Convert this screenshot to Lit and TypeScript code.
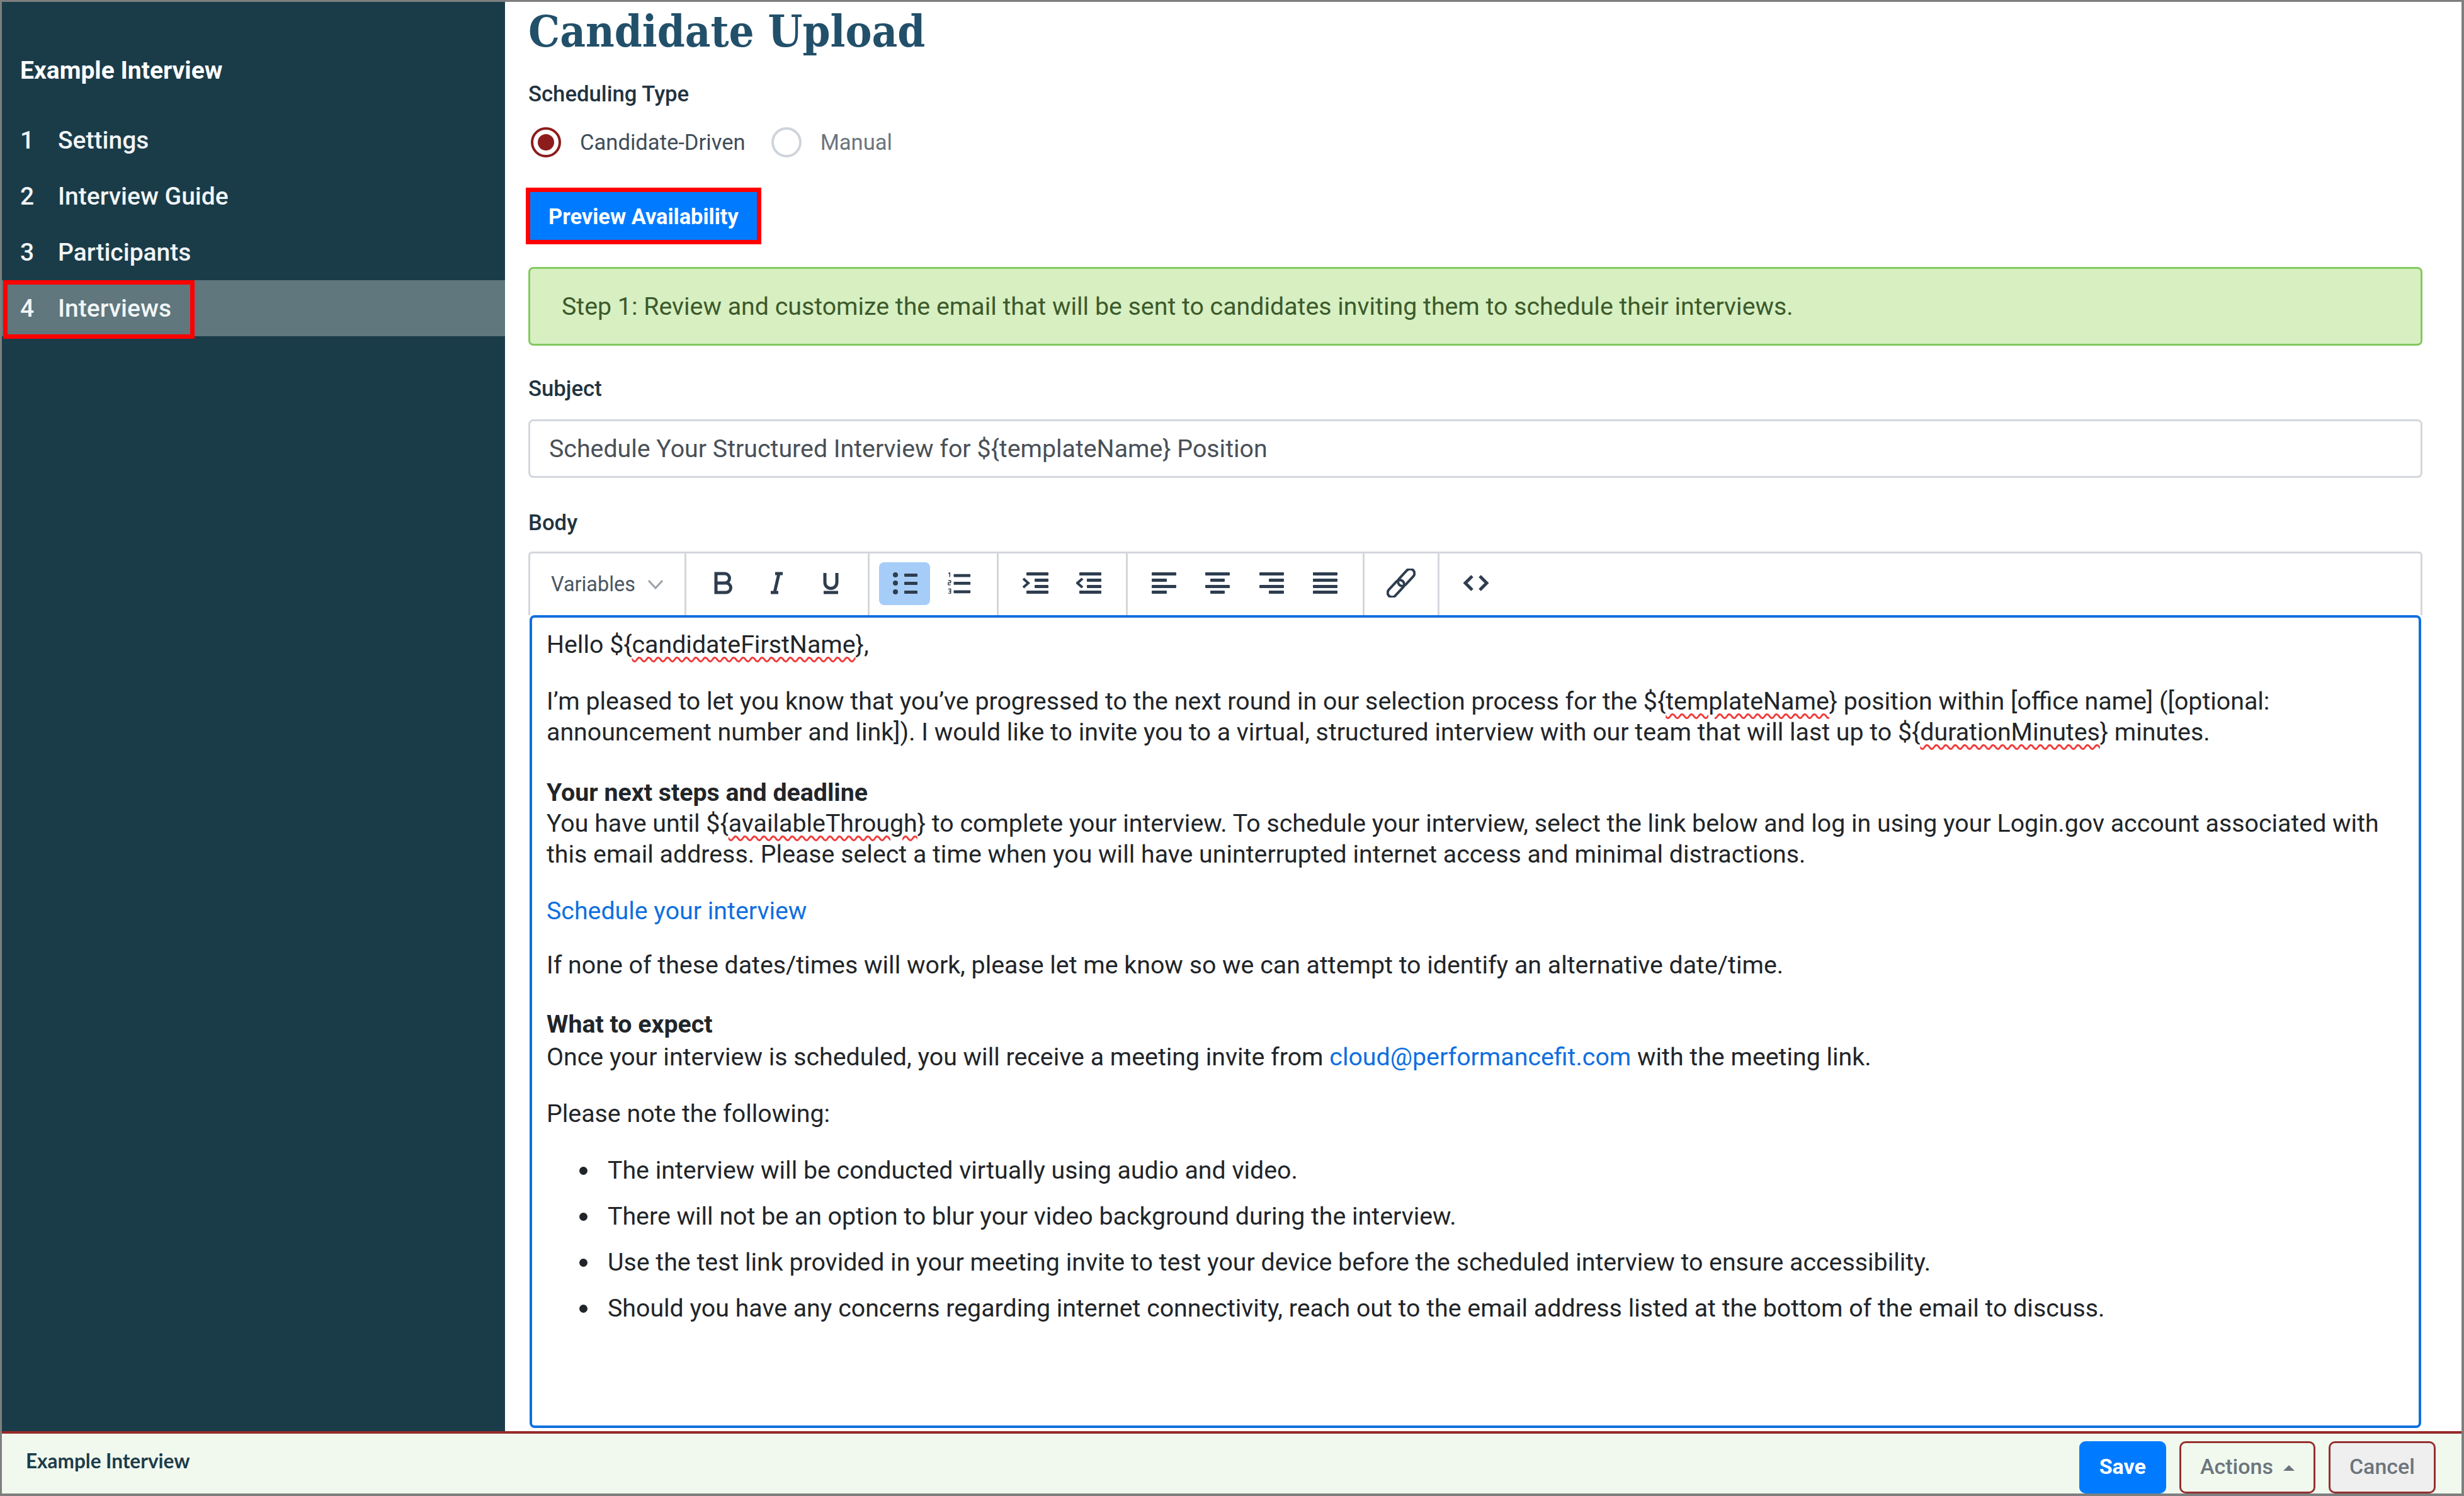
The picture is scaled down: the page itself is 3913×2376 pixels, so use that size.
import { LitElement, html, svg, css } from 'lit';
import { customElement } from 'lit/decorators.js';

const lines = (rows: [number, number, number][]) => html`
    <svg class="icon" viewBox="0 0 40 36" width="40" height="36">
        ${rows.map(([x, y, w]) => svg`<rect x=${x} y=${y} width=${w} height="5" rx="1"></rect>`)}
    </svg>
`;

const stroke = (d: string, w = 42, h = 36) => html`
    <svg class="icon line" viewBox="0 0 ${w} ${h}" width=${w} height=${h}><path d=${d}></path></svg>
`;

const bullet = html`
    <svg class="icon" viewBox="0 0 40 36" width="40" height="36">
        <circle cx="5" cy="5" r="4"></circle><circle cx="5" cy="18" r="4"></circle><circle cx="5" cy="32" r="4"></circle>
        <rect x="19" y="3" width="21" height="5" rx="1"></rect>
        <rect x="19" y="16" width="21" height="5" rx="1"></rect>
        <rect x="19" y="30" width="21" height="5" rx="1"></rect>
    </svg>
`;

const numbered = html`
    <svg class="icon" viewBox="0 0 40 36" width="38" height="36">
        <rect x="10" y="3" width="28" height="5" rx="1"></rect>
        <rect x="10" y="16" width="28" height="5" rx="1"></rect>
        <rect x="10" y="30" width="28" height="5" rx="1"></rect>
        <path class="tiny" d="M1 2 L3.5 1 V8 M1 14 H5 V17.5 H1 V21 H5 M1 28 H5 V35 H1 M2 31.5 H5"></path>
    </svg>
`;

const indent = html`
    <svg class="icon" viewBox="0 0 42 36" width="42" height="36">
        <rect x="7" y="1" width="35" height="5" rx="1"></rect>
        <rect x="20" y="11" width="22" height="5" rx="1"></rect>
        <rect x="20" y="21" width="22" height="5" rx="1"></rect>
        <rect x="7" y="30" width="35" height="5" rx="1"></rect>
        <path class="chev" d="M2 11 L10 18 L2 25"></path>
    </svg>
`;

const outdent = html`
    <svg class="icon" viewBox="0 0 40 36" width="40" height="36">
        <rect x="5" y="1" width="35" height="5" rx="1"></rect>
        <rect x="17" y="11" width="23" height="5" rx="1"></rect>
        <rect x="17" y="21" width="23" height="5" rx="1"></rect>
        <rect x="5" y="30" width="35" height="5" rx="1"></rect>
        <path class="chev" d="M10 11 L2 18 L10 25"></path>
    </svg>
`;

const link = html`
    <svg class="icon line thin" viewBox="0 0 46 46" width="46" height="46">
        <g transform="rotate(-47 23 23)">
            <rect x="-5" y="16" width="32" height="14" rx="7"></rect>
            <rect x="19" y="16" width="32" height="14" rx="7"></rect>
        </g>
    </svg>
`;

const toolbar = [
    [
        stroke('M5 3 H19 a7.5 7.5 0 0 1 0 15 H5 Z M5 18 H21 a7.5 7.5 0 0 1 0 15 H5 Z', 32, 36),
        stroke('M9 3 H21 M15 3 L8 33 M2 33 H14', 24, 36),
        stroke('M4 2 V17 a9.5 9.5 0 0 0 19 0 V2 M2 33 H25', 27, 36),
    ],
    [bullet, numbered],
    [indent, outdent],
    [
        lines([[0, 1, 39], [0, 11, 24], [0, 21, 39], [0, 30, 24]]),
        lines([[0, 1, 39], [8, 11, 23], [0, 21, 39], [8, 30, 23]]),
        lines([[0, 1, 39], [15, 11, 24], [0, 21, 39], [15, 30, 24]]),
        lines([[0, 1, 39], [0, 11, 39], [0, 21, 39], [0, 30, 39]]),
    ],
    [link],
    [stroke('M15 3 L4 14 L15 25 M27 3 L38 14 L27 25', 42, 28)],
];

const navItems = ['Settings', 'Interview Guide', 'Participants', 'Interviews'];

@customElement('app-root')
export class AppRoot extends LitElement {
    static override styles = css`
        :host {
            display: block;
            box-sizing: border-box;
            height: 100vh;
            border: solid #7f7f7f;
            border-width: 3px 4px 4px 3px;
            font-family: Roboto, sans-serif;
            font-size: 39.3px;
            color: #212529;
            background: #fff;
            overflow: hidden;
        }
        *,
        *::before,
        *::after {
            box-sizing: border-box;
        }
        .page {
            display: grid;
            grid-template-rows: 1fr 99px;
            height: 100%;
        }
        .top {
            display: flex;
            min-height: 0;
        }
        .side {
            flex: 0 0 799px;
            background: #1a3c49;
            color: #fff;
        }
        .side h2 {
            margin: 88px 0 45px;
            padding-left: 29px;
            font-size: 39px;
            line-height: 42px;
            font-weight: 700;
        }
        .nav-item {
            position: relative;
            display: flex;
            align-items: center;
            height: 89px;
            padding-left: 29px;
            font-size: 39px;
            font-weight: 500;
            color: #f2f5f6;
        }
        .nav-item span {
            width: 60px;
        }
        .nav-item.active {
            background: #5f777d;
        }
        .nav-item.active::after {
            content: '';
            position: absolute;
            left: 2px;
            top: 0;
            width: 304px;
            height: 93px;
            border: 7px solid #f00;
        }
        .main {
            flex: 1;
            min-width: 0;
            display: flex;
            flex-direction: column;
            padding: 0 62px 5px 37px;
        }
        h1 {
            margin: 0 0 32px;
            font-family: 'DejaVu Serif Condensed', 'DejaVu Serif', serif;
            font-size: 70px;
            line-height: 94px;
            font-weight: 700;
            color: #22506a;
        }
        .label {
            line-height: 40px;
            font-size: 34.7px;
            font-weight: 500;
            color: #22333f;
        }
        .radios {
            display: flex;
            align-items: center;
            height: 50px;
            margin: 32px 0 47px 4px;
            font-size: 34.6px;
            color: #3f4d59;
        }
        .radio {
            width: 48px;
            height: 48px;
            margin-right: 30px;
            border-radius: 50%;
            border: 4px solid #ced4da;
        }
        .radio.on {
            display: grid;
            place-items: center;
            border-color: #8d1c1c;
        }
        .radio.on::before {
            content: '';
            width: 26px;
            height: 26px;
            border-radius: 50%;
            background: #8d1c1c;
        }
        .manual {
            color: #6c757d;
        }
        .radio.second {
            margin-left: 41px;
        }
        .preview {
            align-self: flex-start;
            margin-left: -4px;
            height: 90px;
            padding: 2px 29px 0;
            border: 7px solid #f00;
            background: #007bff;
            color: #fff;
            font: 700 34.4px Roboto, sans-serif;
        }
        .alert {
            display: flex;
            align-items: center;
            height: 125px;
            margin: 36px 0 48px;
            padding-left: 50px;
            border: 3px solid #83c95f;
            border-radius: 8px;
            background: #d7efc1;
            color: #3c5a2c;
        }
        .subject {
            display: flex;
            align-items: center;
            height: 93px;
            margin: 29px 0 51px;
            padding-left: 30px;
            border: 3px solid #d3d7dc;
            border-radius: 8px;
            color: #495057;
        }
        .toolbar {
            display: flex;
            height: 101px;
            margin-top: 26px;
            border: solid #d3d7dc;
            border-width: 3px 3px 0;
            border-radius: 6px 6px 0 0;
        }
        .group {
            display: flex;
            align-items: center;
            padding: 0 15.5px 2px;
            border-right: 3px solid #d3d7dc;
        }
        .group:last-child {
            border-right: 0;
        }
        .variables {
            width: 248px;
            gap: 20px;
            padding: 0 0 0 33px;
            font-size: 32.4px;
            color: #4a5662;
        }
        .variables svg {
            fill: none;
            stroke: #9aa3ab;
            stroke-width: 3;
        }
        .btn {
            display: grid;
            place-items: center;
            width: 85.5px;
            height: 68px;
            padding-bottom: 2px;
            border-radius: 8px;
        }
        .btn.on {
            width: 81px;
            margin-right: 4.5px;
            background: #a6cdf8;
        }
        .icon {
            fill: #2e3d4f;
        }
        .icon.line,
        .icon .chev,
        .icon .tiny {
            fill: none;
            stroke: #2e3d4f;
            stroke-width: 5;
        }
        .icon.thin {
            stroke-width: 4;
        }
        .icon .chev {
            stroke-width: 4;
        }
        .icon .tiny {
            stroke-width: 1.5;
        }
        .editor {
            flex: 1;
            min-height: 0;
            margin: 0 2px;
            padding: 19px 23px 0;
            border: 4px solid #0f6fdf;
            border-radius: 8px;
            line-height: 49px;
        }
        p {
            margin: 0 0 41px;
        }
        p.head {
            margin-top: 47px;
        }
        p.short {
            margin-bottom: 37px;
        }
        p.long {
            margin-bottom: 45px;
        }
        p.long + p b {
            display: block;
            margin-bottom: 3px;
        }
        ul {
            margin: 0;
            padding-left: 97px;
            list-style: none;
        }
        li {
            position: relative;
            margin-bottom: 24px;
        }
        li::before {
            content: '';
            position: absolute;
            left: -45px;
            top: 18px;
            width: 13px;
            height: 13px;
            border-radius: 50%;
            background: #212529;
        }
        b {
            font-weight: 700;
        }
        a {
            color: #0f6fdf;
        }
        .sp {
            text-decoration: underline wavy #f23b3b;
            text-decoration-thickness: 3px;
            text-underline-offset: 6px;
        }
        .foot {
            display: flex;
            align-items: flex-end;
            gap: 21px;
            padding-right: 41px;
            border-top: 4px solid #962a2a;
            background: #f1f9ee;
        }
        .foot strong {
            flex: 1;
            align-self: center;
            padding: 0 0 9px 38px;
            font: 700 31.5px Lato, sans-serif;
            color: #1d3c4a;
        }
        .foot button {
            height: 83px;
            padding: 0 30px 3px;
            border: 3px solid #963030;
            border-radius: 10px;
            background: transparent;
            color: #6c757d;
            font: 500 34px Roboto, sans-serif;
        }
        .foot button.save {
            padding: 0 32px 3px;
            border: 0;
            background: #007bff;
            color: #fff;
            font-weight: 700;
        }
        .foot button.cancel {
            background: #efefef;
        }
        .caret {
            display: inline-block;
            margin-left: 16px;
            vertical-align: 5px;
            border: solid transparent;
            border-width: 0 9px 9px;
            border-bottom-color: #6c757d;
        }
    `;

    override render() {
        return html`
            <div class="page">
                <div class="top">
                    <nav class="side">
                        <h2>Example Interview</h2>
                        ${navItems.map(
                            (item, i) => html`
                                <div class="nav-item ${i === 3 ? 'active' : ''}"><span>${i + 1}</span>${item}</div>
                            `
                        )}
                    </nav>
                    <main class="main">
                        <h1>Candidate Upload</h1>
                        <div class="label">Scheduling Type</div>
                        <div class="radios">
                            <div class="radio on"></div>
                            Candidate-Driven
                            <div class="radio second"></div>
                            <span class="manual">Manual</span>
                        </div>
                        <button class="preview">Preview Availability</button>
                        <div class="alert">
                            Step 1: Review and customize the email that will be sent to candidates inviting them to
                            schedule their interviews.
                        </div>
                        <div class="label">Subject</div>
                        <div class="subject">Schedule Your Structured Interview for \${templateName} Position</div>
                        <div class="label">Body</div>
                        <div class="toolbar">
                            <div class="group variables">
                                Variables
                                <svg viewBox="0 0 24 16" width="24" height="16"><path d="M1 2 L12 14 L23 2"></path></svg>
                            </div>
                            ${toolbar.map(
                                (group, g) => html`
                                    <div class="group">
                                        ${group.map(
                                            (icon, i) =>
                                                html`<div class="btn ${g === 1 && i === 0 ? 'on' : ''}">${icon}</div>`
                                        )}
                                    </div>
                                `
                            )}
                        </div>
                        <div class="editor">
                            <p>Hello \${<span class="sp">candidateFirstName</span>},</p>
                            <p>
                                I’m pleased to let you know that you’ve progressed to the next round in our selection
                                process for the \${<span class="sp">templateName</span>} position within [office name]
                                ([optional: announcement number and link]). I would like to invite you to a virtual,
                                structured interview with our team that will last up to
                                \${<span class="sp">durationMinutes</span>} minutes.
                            </p>
                            <p class="head">
                                <b>Your next steps and deadline</b><br />
                                You have until \${<span class="sp">availableThrough</span>} to complete your interview.
                                To schedule your interview, select the link below and log in using your Login.gov
                                account associated with this email address. Please select a time when you will have
                                uninterrupted internet access and minimal distractions.
                            </p>
                            <p class="short"><a>Schedule your interview</a></p>
                            <p class="long">
                                If none of these dates/times will work, please let me know so we can attempt to
                                identify an alternative date/time.
                            </p>
                            <p>
                                <b>What to expect</b>
                                Once your interview is scheduled, you will receive a meeting invite from
                                <a>cloud@performancefit.com</a> with the meeting link.
                            </p>
                            <p>Please note the following:</p>
                            <ul>
                                <li>The interview will be conducted virtually using audio and video.</li>
                                <li>There will not be an option to blur your video background during the interview.</li>
                                <li>
                                    Use the test link provided in your meeting invite to test your device before the
                                    scheduled interview to ensure accessibility.
                                </li>
                                <li>
                                    Should you have any concerns regarding internet connectivity, reach out to the email
                                    address listed at the bottom of the email to discuss.
                                </li>
                            </ul>
                        </div>
                    </main>
                </div>
                <footer class="foot">
                    <strong>Example Interview</strong>
                    <button class="save">Save</button>
                    <button>Actions<i class="caret"></i></button>
                    <button class="cancel">Cancel</button>
                </footer>
            </div>
        `;
    }
}
